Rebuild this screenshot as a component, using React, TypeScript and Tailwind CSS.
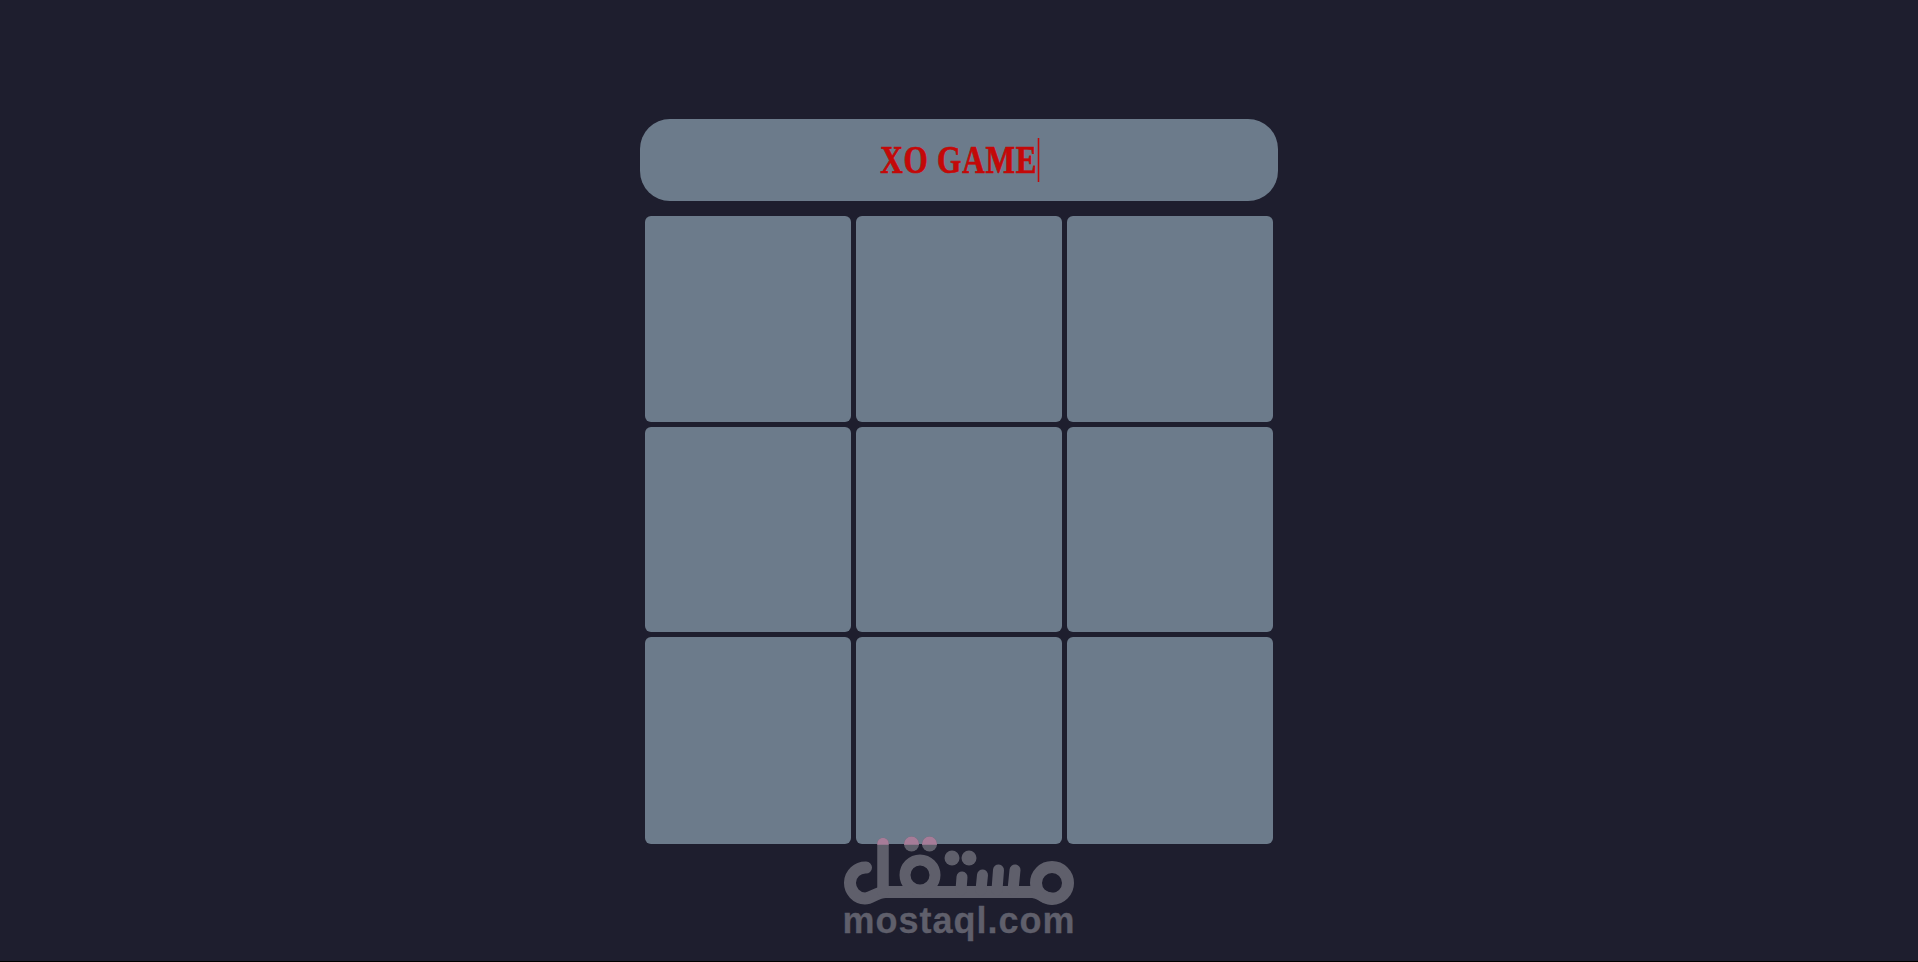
export default function App() {
  const cells = Array.from({ length: 9 });
  const shapes = (
    <>
      <g fill="none" strokeLinecap="round" strokeLinejoin="round">
        <path d="M866 867.500A15.500 15.500 0 1 0 865 898.500C872 898.500 876 892 886 892L1032 892C1040 892 1044 898.500 1052 898.500" strokeWidth="12" />
        <path d="M883 843.500L883 892" strokeWidth="11.500" />
        <circle cx="920" cy="875" r="15" strokeWidth="11" />
        <circle cx="1052" cy="883" r="16" strokeWidth="12" />
        <path d="M961 890L962 877" strokeWidth="11" />
        <path d="M981 890L982.500 875" strokeWidth="11" />
        <path d="M997 890L998.500 870" strokeWidth="11" />
        <path d="M1013 890L1015 870" strokeWidth="11" />
      </g>
      <g stroke="none">
        <circle cx="911.500" cy="844" r="7.500" />
        <circle cx="929.500" cy="844" r="7.500" />
        <circle cx="952" cy="858" r="7.500" />
        <circle cx="969" cy="858" r="7.500" />
      </g>
    </>
  );
  return (
    <div className="relative flex min-h-[962px] w-full flex-col items-center overflow-hidden border-b border-black bg-[#1e1e2e] pt-[119px]">
      <div className="flex h-[82px] w-[638px] items-center justify-center rounded-[30px] bg-[#6c7b8b]">
        <span className="relative inline-block scale-x-[0.78] font-['Liberation_Serif',serif] text-[40px] leading-[44px] font-bold tracking-[1px] whitespace-nowrap text-[#c40808] [-webkit-text-stroke:0.7px_#c40808]">
          XO GAME
          <span className="absolute top-0 right-[-3px] h-[44px] w-[2px] bg-[#c40808]" />
        </span>
      </div>
      <div className="mt-[15px] grid w-[628px] grid-cols-3 grid-rows-[206px_205px_207px] gap-[5px]">
        {cells.map((_, i) => (
          <div key={i} className="rounded-[6px] bg-[#6c7b8b]" />
        ))}
      </div>
      <div className="absolute top-[830px] left-[840px] flex w-[238px] flex-col items-center">
        <svg width="238" height="80" viewBox="840 830 238 80" className="block">
          <defs>
            <clipPath id="overCell">
              <rect x="840" y="830" width="238" height="14.700" />
            </clipPath>
          </defs>
          <g fill="#5f5f6b" stroke="#5f5f6b">{shapes}</g>
          <g fill="#a67c98" stroke="#a67c98" clipPath="url(#overCell)">{shapes}</g>
        </svg>
        <span className="mt-[-10px] font-['Liberation_Sans',sans-serif] text-[36px] leading-[42px] font-bold tracking-[1px] whitespace-nowrap text-[#5f5f6b] [-webkit-text-stroke:0.3px_#5f5f6b]">
          mostaql.com
        </span>
      </div>
    </div>
  );
}
